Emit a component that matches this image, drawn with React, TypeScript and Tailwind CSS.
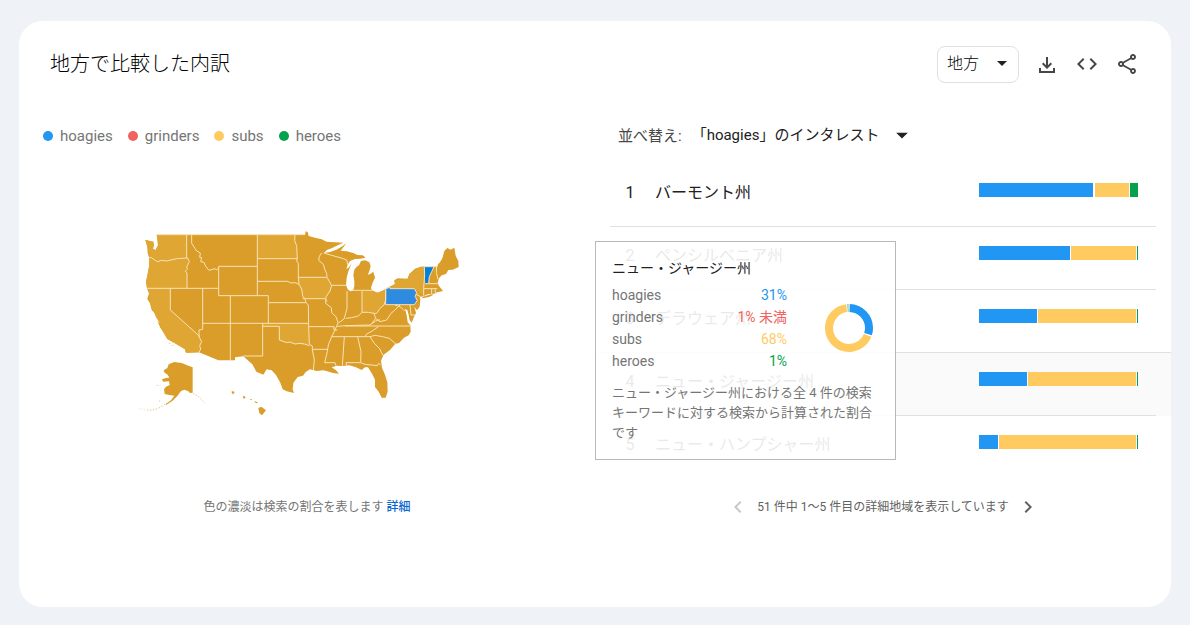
import { MdArrowDropDown, MdChevronLeft, MdChevronRight, MdCode, MdOutlineShare } from 'react-icons/md';

interface Term {
  name: string;
  dot: string;
  text: string;
  share: string;
}

interface Region {
  name: string;
  // widths of the hoagies, grinders, subs and heroes segments, null when there is no data
  bars: (number | null)[];
  hovered?: boolean;
}

const terms: Term[] = [
  { name: 'hoagies', dot: 'bg-[#2196f3]', text: 'text-[#2196f3]', share: '31%' },
  { name: 'grinders', dot: 'bg-[#f06360]', text: 'text-[#f06360]', share: '1% 未満' },
  { name: 'subs', dot: 'bg-[#ffca5f]', text: 'text-[#ffca5f]', share: '68%' },
  { name: 'heroes', dot: 'bg-[#04a24c]', text: 'text-[#04a24c]', share: '1%' },
];

const regions: Region[] = [
  { name: 'バーモント州', bars: [114, 0, 34, 8] },
  { name: 'ペンシルベニア州', bars: [91, null, 65, 1] },
  { name: 'デラウェア州', bars: [58, null, 98, 1] },
  { name: 'ニュー・ジャージー州', bars: [48, null, 108, 1], hovered: true },
  { name: 'ニュー・ハンプシャー州', bars: [19, null, 137, 1] },
];

const UsMap = () => (
  <svg viewBox="0 0 1032 585" className="w-[344px]" role="img" aria-label="米国の地図">
    <g fill="#da9d29">
      <path d="M65 29H510L512 19 518 21 521 33 540 38 560 43 575 50 600 52 625 53 608 61 590 70 577 74 566 84 585 81 604 74 620 65 634 55 625 67 617 77 635 79 655 84 667 90 683 91 692 98 676 101 660 102 645 108 638 119 634 133 642 127 650 115 640 139 635 158 633 180 638 193 646 199 655 195 658 183 658 168 655 150 658 134 665 125 672 121 678 108 690 106 703 112 707 124 702 141 698 149 707 146 715 140 720 158 713 173 708 188 712 200 728 203 745 196 760 187 780 177 778 166 788 160 818 161 823 147 840 131 857 125 907 125 909 118 915 112 922 100 928 78 937 69 947 74 958 68 962 92 970 108 971 126 953 134 940 135 933 147 920 151 912 160 908 174 912 183 920 193 924 198 907 202 897 206 880 207 865 214 855 216 856 226 854 245 846 256 838 245 843 264 836 278 830 293 824 286 821 270 817 255 810 252 815 270 817 284 818 292 826 301 827 320 821 331 807 338 793 353 780 358 765 375 745 390 738 408 741 428 750 449 757 472 758 500 752 518 740 518 731 500 720 486 720 464 712 448 699 427 690 427 680 435 663 427 643 421 622 423 605 422 590 427 603 436 612 446 594 444 582 440 565 436 545 438 525 433 512 441 504 452 488 456 475 474 473 493 477 504 455 499 443 493 436 473 423 450 410 436 395 433 385 449 364 440 352 418 340 407 325 394 300 397V406H250L192 382 153 383 150 373 125 356 97 342 85 320 75 306 67 287 77 298 62 274 68 273 50 255 45 235 37 222 42 205 36 190 33 170 38 150 42 125 43 100 38 85 37 65 31 45 55 50 57 60 54 72 62 75 69 61 68 45Z" />
      <path d="M173 503V427L160 422 140 414 118 411 101 418 97 429 86 436 89 443 98 449 103 458 93 459 81 463 84 470 102 469 104 480 93 485 87 493 89 507 103 510 118 512 108 526 92 537 93 540 113 527 127 513 138 498 148 494 160 499 165 504Z" />
      <path d="M289 500l6-2 4 5-6 5zM323 514l5-1 4 5-6 3zM344 522l8 1-4 3zM358 528l8 3 3 4-7-1zM370 549l9-4 14 11-12 15-8-7z" />
      <path d="M862 216l26-8 8 1-14 7-20 4zM101 355l6 1-5 1zM113 359l3 4-4-1z" />
    </g>
    <g fill="none" stroke="#ebc887" strokeWidth="3" strokeDasharray="4 5">
      <path d="M90 538L68 551 48 556 33 555M174 506L190 513 200 524 210 535M65 481H76M72 529l4-2" />
      <path d="M30 555L10 550" opacity="0.5" />
    </g>
    <g fill="#dfa633">
      <path d="M65 29H155V99L125 101 95 108 62 107 43 97 37 65 31 45 55 50 54 72 62 75 69 61Z" />
      <path d="M43 97L62 107 95 108 125 101 158 99 163 110 152 135 156 145V190H36L33 170 42 125Z" />
      <path d="M36 190H106V255L195 335 200 350 193 372 192 382 153 383 150 373 97 342 75 306 77 298 62 274 45 235 42 205Z" />
      <path d="M367 29H480L487 101H367Z" />
      <path d="M490 157H575L590 181 585 200 573 221H505L492 177Z" />
      <path d="M681 198L708 194 728 203 752 195V232L735 250 717 265 681 262Z" />
      <path d="M763 190L780 177 778 166 818 161 823 147 857 125H868L869 150 866 210 838 191Z" />
      <path d="M383 304H433V345L455 353 480 357 522 360V295H383Z" />
    </g>
    <path d="M752 195L763 186 765 191H838L845 205 840 215 846 228 838 239H752Z" fill="#2e8be0" />
    <path d="M868 125H897L890 140 883 155 881 175H871L869 150Z" fill="#0080de" />
    <g fill="none" stroke="#f8e3b7" strokeWidth="3" strokeLinejoin="round">
      {/* West and plains */}
      <path d="M65 29H510M43 97L49 98 62 107 68 110 80 106 95 108 125 101 158 99M155 29V99M158 99L163 110 155 126 158 132 151 138 156 145V190M36 190H251M170 29V55L180 70 185 78 196 84 194 97 200 98 197 110 207 112 212 124 222 136 240 131 244 134 251 130" />
      <path d="M251 124H367V212H251ZM367 29V124M367 101H487M367 169H458L468 174 480 173 492 178 500 192 503 213 510 222 513 233M367 212H400V233H513M106 190V255L195 335M203 190V313L192 315V335L200 350 194 362 197 372 192 382" />
      <path d="M286 212V405M203 295H521M400 233V295M383 295V393H325M383 304H433V345L455 353 465 351 480 357 495 355 508 357 523 362M480 29L479 47 485 62 487 101 485 108 490 115V157L492 178M490 157H575" />
      {/* Mississippi valley and Great Lakes */}
      <path d="M503 221H570L577 229M513 233L520 240 521 305 523 358 532 363V375L538 405 535 437M560 84L553 94 551 106 565 118 570 135 575 145 576 157 590 181 585 198 573 215 572 235 589 248 590 263 603 275 609 293 605 303 600 315 590 335 580 360 577 380 569 413H600L603 422M521 305H597V315H607M532 373H577" />
      <path d="M590 181H634M566 84L590 91 622 100 635 105 638 119M636 198V250L632 265 627 282 610 294M650 196H712M681 198V262M752 195V225L747 240 735 250 725 265 717 265 700 262 681 262 670 273 650 278 632 280" />
      {/* East */}
      <path d="M717 265L722 280 735 290 755 285 768 265 780 255 795 240M722 280L710 296M752 239H838M780 240L797 246 809 258M825 240L828 270H840M752 239V191L765 187V191H838L846 205 840 214 847 226 838 239" />
      <path d="M607 304L630 302 705 300 722 288 735 284M630 303H825M730 305L712 318 695 327 690 335M590 335H690L705 335 720 331 743 335 763 340 783 357M628 335L622 422M668 335L678 380 677 413H633L635 421M677 413L690 418 727 422 731 415 737 420M705 335L718 355 733 370 743 390" />
      <path d="M868 125L869 150 866 190V212M871 176H908M866 191H907M890 191V207M897 125L890 140 883 155 881 175M905 123L904 142 909 163M868 125H905M841 207L857 215M899 191L902 203" />
    </g>
  </svg>
);

const Donut = () => (
  <svg viewBox="0 0 48 48" className="size-12" fill="none" strokeWidth="8" aria-hidden="true">
    <g transform="rotate(-90 24 24)">
      <circle cx="24" cy="24" r="20" stroke="#2196f3" pathLength="100" strokeDasharray="29.5 70.5" strokeDashoffset="-0.5" />
      <circle cx="24" cy="24" r="20" stroke="#ffca5f" pathLength="100" strokeDasharray="67 33" strokeDashoffset="-31" />
      <circle cx="24" cy="24" r="20" stroke="#04a24c" strokeOpacity="0.5" pathLength="100" strokeDasharray="1 99" strokeDashoffset="-98.7" />
    </g>
  </svg>
);

const Tooltip = () => (
  <div
    role="tooltip"
    className="absolute top-[77px] left-0 w-[301px] border border-[#b8b8b8] bg-white/90 px-4 py-4 text-[#757575]"
  >
    <h3 className="text-sm leading-5 text-[#212121]">ニュー・ジャージー州</h3>
    <div className="mt-[6px] flex items-center justify-between pr-[6px]">
      <table className="w-[175px] text-sm">
        <tbody>
          {terms.map((term) => (
            <tr key={term.name}>
              <th scope="row" className="p-0 text-left leading-[22px] font-normal">
                {term.name}
              </th>
              <td className={`p-0 text-right leading-[22px] ${term.text}`}>{term.share}</td>
            </tr>
          ))}
        </tbody>
      </table>
      <Donut />
    </div>
    <p className="mt-[11px] text-[13px] leading-5">
      ニュー・ジャージー州における全 4 件の検索キーワードに対する検索から計算された割合です
    </p>
  </div>
);

const RegionRow = ({ region, rank }: { region: Region; rank: number }) => (
  <li className={region.hovered ? '-mx-[15px] bg-[#fafafa] px-[15px] shadow-[0_-1px_0_#e0e0e0]' : ''}>
    <div className={`flex h-[63px] items-start ${rank < regions.length ? 'border-b border-[#e0e0e0]' : ''}`}>
      <span className="w-10 pt-[17px] text-center leading-6">{rank}</span>
      <span className="ml-[5px] flex-1 pt-[17px] leading-6">{region.name}</span>
      <div className="mt-[19px] mr-[18px] flex h-[14px] w-[159px] gap-px">
        {region.bars.map(
          (width, i) => width !== null && <div key={terms[i].name} className={terms[i].dot} style={{ width }} />
        )}
      </div>
    </div>
  </li>
);

const App = () => {
  return (
    <div className="min-h-screen bg-[#eff3f8] px-[19px] pt-[21px] pb-[18px] font-[Roboto,'Noto_Sans_CJK_JP',sans-serif] text-[#212121]">
      <section className="rounded-3xl bg-white pb-[88px]">
        <header className="flex items-center justify-between pt-[25px] pr-8 pl-[31px]">
          <h2 className="pb-[2px] text-xl leading-8 font-light text-black">地方で比較した内訳</h2>
          <div className="flex items-center gap-4 text-[#444746]">
            <div className="relative">
              <select
                aria-label="地域の単位"
                className="h-[37px] w-[82px] appearance-none rounded-lg border border-[#e0e0e0] bg-white pb-[2px] pl-[9px] text-base font-light text-black"
              >
                <option>地方</option>
                <option>都市</option>
              </select>
              <MdArrowDropDown className="pointer-events-none absolute top-[5px] right-[5px] size-6 text-[#212121]" />
            </div>
            <button type="button" aria-label="ダウンロード">
              <svg viewBox="0 0 24 24" className="size-6" fill="currentColor">
                <path d="M12 16l-5-5 1.4-1.45 2.6 2.6V4h2v8.15l2.6-2.6L17 11l-5 5zM4 20v-5h2v3h12v-3h2v5H4z" />
              </svg>
            </button>
            <button type="button" aria-label="埋め込み" className="pb-px">
              <MdCode className="size-6" />
            </button>
            <button type="button" aria-label="共有" className="pb-px">
              <MdOutlineShare className="size-6" />
            </button>
          </div>
        </header>

        <div className="mt-[38px] grid grid-cols-2">
          <div className="flex flex-col items-center">
            <ul className="flex h-[30px] items-center gap-[15px] self-start pl-6 text-[15px] text-[#757575]">
              {terms.map((term) => (
                <li key={term.name} className="flex items-center gap-[7px]">
                  <span className={`size-[10px] rounded-full ${term.dot}`} />
                  {term.name}
                </li>
              ))}
            </ul>
            <div className="mt-[74px]">
              <UsMap />
            </div>
            <p className="mt-[75px] text-xs leading-6 text-[#757575]">
              色の濃淡は検索の割合を表します{' '}
              <a href="#details" className="font-medium text-[#0b66d0]">
                詳細
              </a>
            </p>
          </div>

          <div>
            <div className="flex h-[30px] items-center pl-[23px] text-[15px]">
              <label htmlFor="sort" className="text-[#444746]">
                並べ替え:
              </label>
              <div className="relative ml-[10px]">
                <select
                  id="sort"
                  className="h-[30px] w-[224px] appearance-none bg-transparent pb-px text-[15px]"
                >
                  <option>「hoagies」のインタレスト</option>
                  <option>「subs」のインタレスト</option>
                </select>
                <MdArrowDropDown className="pointer-events-none absolute top-0 right-0 size-7" />
              </div>
            </div>

            <div className="relative mt-[13px]">
              <ol className="px-[15px]">
                {regions.map((region, i) => (
                  <RegionRow key={region.name} region={region} rank={i + 1} />
                ))}
              </ol>
              <Tooltip />
            </div>

            <div className="mt-4 flex h-6 items-center justify-center gap-[7px] text-xs text-[#616161]">
              <button type="button" aria-label="前へ" disabled className="text-[#c8c8c8]">
                <MdChevronLeft className="size-6" />
              </button>
              <span className="pb-px">51 件中 1～5 件目の詳細地域を表示しています</span>
              <button type="button" aria-label="次へ">
                <MdChevronRight className="size-6" />
              </button>
            </div>
          </div>
        </div>
      </section>
    </div>
  );
};

export default App;
